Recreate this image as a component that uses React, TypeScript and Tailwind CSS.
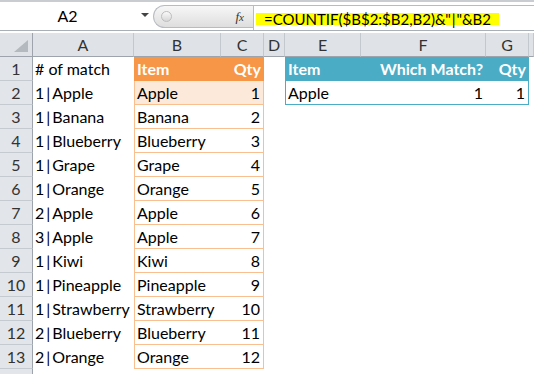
import React from 'react';

const cols = ['A', 'B', 'C', 'D', 'E', 'F', 'G', ''];

const matches = [
  '1|Apple', '1|Banana', '1|Blueberry', '1|Grape', '1|Orange', '2|Apple',
  '3|Apple', '1|Kiwi', '1|Pineapple', '1|Strawberry', '2|Blueberry', '2|Orange',
];
const items = [
  'Apple', 'Banana', 'Blueberry', 'Grape', 'Orange', 'Apple',
  'Apple', 'Kiwi', 'Pineapple', 'Strawberry', 'Blueberry', 'Orange',
];

const font = { fontFamily: 'Lato, "Open Sans", sans-serif' };

const FormulaBar = () => (
  <div className="flex h-[31px] border-t-2 border-b border-t-[#c9cdd2] border-b-[#a9afb6] bg-white">
    <div className="relative flex w-[153px] items-center justify-center">
      <span className="text-[16px] text-black pr-[18px]">A2</span>
      <span className="absolute left-[141px] top-[11px] h-0 w-0 border-x-[4px] border-t-[4px] border-x-transparent border-t-[#444]" />
    </div>
    <div className="mt-[3px] mb-[2px] flex w-[100px] items-center rounded-l-full border border-r-0 border-[#b8bcc2] bg-gradient-to-b from-[#f7f7f7] to-[#dedede]">
      <span className="ml-[7px] h-[11px] w-[11px] rounded-full border border-[#bdbdbd] bg-gradient-to-b from-[#fafafa] to-[#d6d6d6]" />
      <span className="ml-auto mr-[9px] italic text-[13px] text-[#333]" style={{ fontFamily: '"Liberation Serif", serif' }}>
        f<span className="text-[11px]">x</span>
      </span>
    </div>
    <div className="mt-[3px] flex flex-1 items-center border-l border-t border-[#b8bcc2] pl-[2px]">
      <span className="mt-[1px] inline-block bg-[#ffff00] px-[8px] text-[15px] leading-[12px] text-black">
        =COUNTIF($B$2:$B2,B2)&amp;"<span className="mx-[1px]">|</span>"&amp;B2
      </span>
    </div>
  </div>
);

const Match = ({ text }: { text: string }) => {
  const [n, name] = text.split('|');
  return (
    <>
      {n}
      <span className="mx-[2px]">|</span>
      {name}
    </>
  );
};

const App = () => {
  return (
    <div className="h-[374px] w-[534px] overflow-hidden bg-white text-black" style={font}>
      <FormulaBar />
      <div className="mt-[2px] grid grid-cols-[33px_101px_87px_43px_21px_76px_125px_43px_1fr] auto-rows-[24px] text-[16px]">
        {/* column headers */}
        <div className="relative border-r border-b border-[#9ea4ab] bg-[#dfe3e8]">
          <svg className="absolute right-[4px] bottom-[4px]" width="14" height="12" viewBox="0 0 14 12">
            <polygon points="14,0 14,12 0,12" fill="#b4b9bf" />
          </svg>
        </div>
        {cols.map((c, i) => (
          <div
            key={c + i}
            className="flex items-center justify-center border-r border-b border-r-[#c3c8ce] border-b-[#9ea4ab] bg-[#dfe3e8] text-[#333]"
          >
            {c}
          </div>
        ))}

        {/* row 1 */}
        <div className="flex items-center justify-center border-r border-b border-r-[#9ea4ab] border-b-[#c5cad0] bg-[#e2e5ea] text-[#333]">1</div>
        <div className="flex items-center pl-[2px]"># of match</div>
        <div className="flex items-center border-l border-[#f79646] bg-[#f79646] pl-[2px] font-bold text-white">Item</div>
        <div className="flex items-center justify-end bg-[#f79646] pr-[3px] font-bold text-white">Qty</div>
        <div />
        <div className="flex items-center bg-[#4bacc6] pl-[3px] font-bold text-white">Item</div>
        <div className="flex items-center justify-end bg-[#4bacc6] pr-[3px] font-bold text-white">Which Match?</div>
        <div className="flex items-center justify-end bg-[#4bacc6] pr-[3px] font-bold text-white">Qty</div>
        <div />

        {matches.map((m, i) => {
          const first = i === 0;
          return (
            <React.Fragment key={i}>
              <div className="flex items-center justify-center border-r border-b border-r-[#9ea4ab] border-b-[#c5cad0] bg-[#e2e5ea] text-[#333]">
                {i + 2}
              </div>
              <div className="flex items-center whitespace-nowrap pl-[2px]">
                <Match text={m} />
              </div>
              <div className={`flex items-center border-l border-b border-[#fabf8f] pl-[2px] ${first ? 'bg-[#fde9d9]' : ''}`}>
                {items[i]}
              </div>
              <div className={`flex items-center justify-end border-r border-b border-[#fabf8f] pr-[3px] ${first ? 'bg-[#fde9d9]' : ''}`}>
                {i + 1}
              </div>
              <div />
              {first ? (
                <>
                  <div className="flex items-center border-l border-b border-[#4bacc6] pl-[2px]">Apple</div>
                  <div className="flex items-center justify-end border-b border-[#4bacc6] pr-[3px]">1</div>
                  <div className="flex items-center justify-end border-r border-b border-[#4bacc6] pr-[3px]">1</div>
                </>
              ) : (
                <>
                  <div />
                  <div />
                  <div />
                </>
              )}
              <div />
            </React.Fragment>
          );
        })}

        <div className="border-r border-[#9ea4ab] bg-[#e2e5ea]" />
      </div>
    </div>
  );
};

export default App;
